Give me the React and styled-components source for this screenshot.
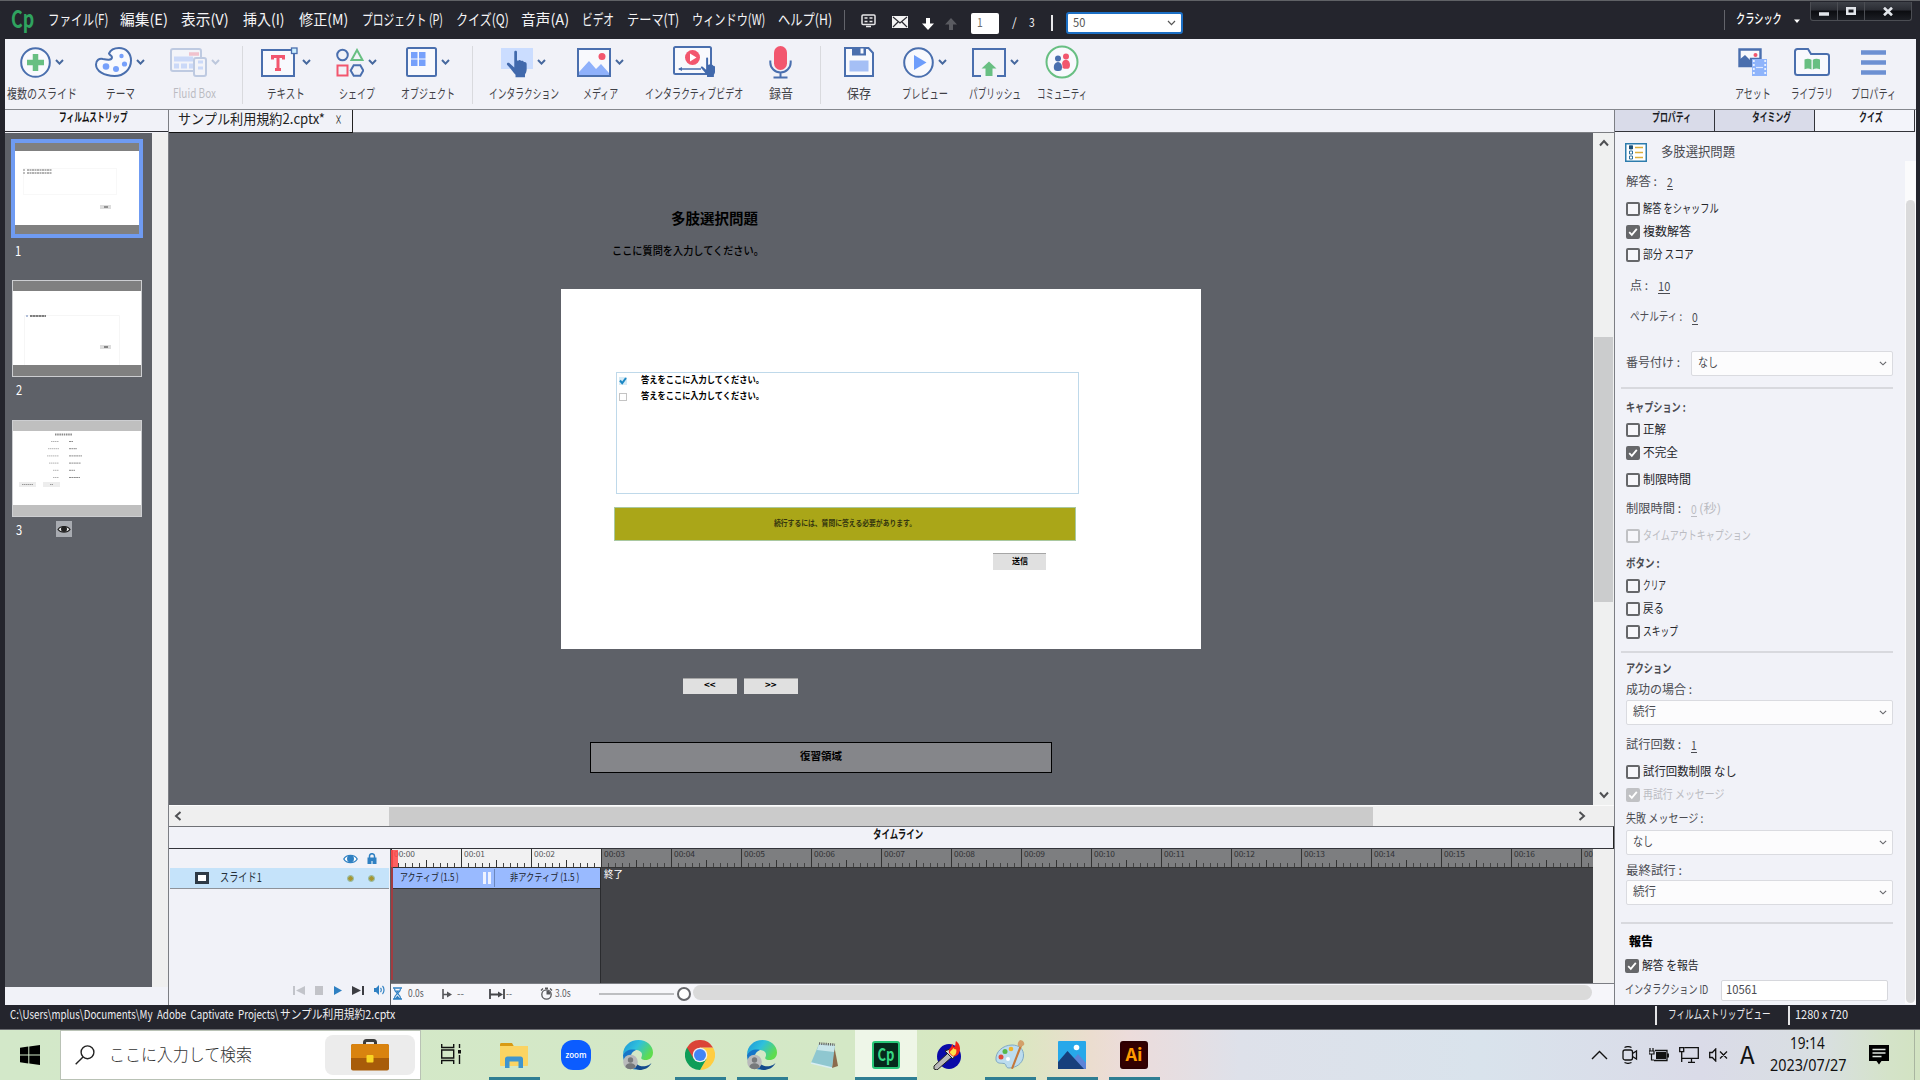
import React, { useLayoutEffect, useRef, useState } from 'react';
import styled, { createGlobalStyle } from 'styled-components';

const GlobalStyle = createGlobalStyle`
  * {
    box-sizing: border-box;
  }

  body {
    margin: 0;
    overflow: hidden;
    font-family: 'Noto Sans CJK JP', 'Noto Sans', sans-serif;
    font-size: 12px;
    color: #3f4046;
  }

  svg {
    display: block;
    flex: none;
  }
`;

/* ---------- text that keeps a fixed width ---------- */

const FitBox = styled.span`
  display: block;
  flex: none;
  width: ${p => p.$w}px;
  height: ${p => p.$size * 1.4}px;
  line-height: ${p => p.$size * 1.4}px;
  font-size: ${p => p.$size}px;
  font-weight: ${p => p.$weight};
  color: ${p => p.$color || 'inherit'};
  white-space: pre;
`;

const FitInner = styled.span`
  display: inline-block;
  transform-origin: 0 50%;
`;

function Fit({ w, size = 12, weight = 400, color, children }) {
  const ref = useRef(null);
  const [scale, setScale] = useState(1);

  useLayoutEffect(() => {
    setScale(w / ref.current.offsetWidth);
  }, [w, children]);

  return (
    <FitBox $w={w} $size={size} $weight={weight} $color={color}>
      <FitInner ref={ref} style={{ transform: `translateY(-1px) scaleX(${scale})` }}>{children}</FitInner>
    </FitBox>
  );
}

/* ---------- window ---------- */

const Screen = styled.div`
  width: 1920px;
  height: 1080px;
  display: flex;
  flex-direction: column;
  overflow: hidden;
`;

const AppWindow = styled.div`
  height: 1030px;
  flex: none;
  display: flex;
  flex-direction: column;
  background: #24252d;
  border-top: 1px solid #606266;
  border-bottom: 1px solid #6a6c70;
`;

const TitleBar = styled.div`
  height: 38px;
  flex: none;
  display: flex;
  align-items: flex-start;
  padding-left: 11px;
  color: #f4f4f6;
`;

const Logo = styled.div`
  width: 37px;
  margin-top: 1px;
  color: #2fa35f;
`;

const Menus = styled.div`
  width: 796px;
  height: 37px;
  display: flex;
  align-items: center;
  flex: none;
`;

const MenuItem = styled.div`
  margin-right: ${p => p.$gap}px;
`;

const BarLine = styled.span`
  width: ${p => p.$w || 1}px;
  height: ${p => p.$h || 20}px;
  flex: none;
  background: ${p => p.$color || '#63646b'};
`;

const TitleTools = styled.div`
  height: 44px;
  display: flex;
  align-items: center;
  flex: none;
`;

const Spacer = styled.div`
  width: ${p => p.$w}px;
  flex: none;
`;

const PageInput = styled.div`
  width: 28px;
  height: 21px;
  padding-left: 6px;
  display: flex;
  align-items: center;
  background: #fff;
  border-radius: 2px;
  color: #6b6b6b;
`;

const ZoomSelect = styled.div`
  width: 117px;
  height: 22px;
  padding: 0 5px;
  display: flex;
  align-items: center;
  justify-content: space-between;
  background: #fff;
  border: 2px solid #1c6fc4;
  border-radius: 3px;
  color: #555;
`;

const Workspace = styled.div`
  height: 38px;
  margin-left: auto;
  padding-top: 9px;
  display: flex;
  align-items: flex-start;
`;

const WindowButtons = styled.div`
  display: flex;
  height: 19px;
  margin: -8px 8px 0 10px;
  border: 1px solid #4b4d53;
  border-top: none;
  border-radius: 0 0 3px 3px;
  background: linear-gradient(#3e4148, #2a2c33 45%, #0b0c10 50%, #1c1e24);
`;

const WindowButton = styled.div`
  width: ${p => p.$w}px;
  display: flex;
  align-items: center;
  justify-content: center;
  border-right: ${p => (p.$last ? 'none' : '1px solid #4b4d53')};
`;

const Frame = styled.div`
  height: 966px;
  margin: 0 4px 0 5px;
  display: flex;
  flex-direction: column;
  background: #f1f2f8;
`;

/* ---------- toolbar ---------- */

const Toolbar = styled.div`
  height: 71px;
  flex: none;
  display: flex;
  border-bottom: 1px solid #85888e;
`;

const Tool = styled.div`
  width: ${p => p.$w}px;
  flex: none;
  display: flex;
  flex-direction: column;
  align-items: center;
  padding-top: 6px;
  opacity: ${p => (p.$disabled ? 0.3 : 1)};
`;

const ToolIcon = styled.div`
  height: 34px;
  display: flex;
  align-items: center;
  gap: 4px;
  margin-bottom: 6px;
`;

const ToolSep = styled.div`
  width: ${p => p.$w}px;
  flex: none;
  display: flex;
  justify-content: center;
  padding-top: 7px;
`;

const Push = styled.div`
  flex: 1;
`;

/* ---------- columns ---------- */

const Columns = styled.div`
  flex: 1;
  min-height: 0;
  display: flex;
`;

const FilmColumn = styled.div`
  width: 164px;
  flex: none;
  display: flex;
  flex-direction: column;
  border-right: 1px solid #7c7e84;
`;

const PanelTitle = styled.div`
  height: 22px;
  flex: none;
  display: flex;
  padding-left: 54px;
  color: #111;
  border-bottom: 1px solid #2d2e34;
`;

const FilmRow = styled.div`
  display: flex;
  height: 854px;
  margin-top: 1px;
`;

const FilmBody = styled.div`
  width: 147px;
  padding-left: 6px;
  background: #5e6168;
`;

const FilmTrack = styled.div`
  flex: 1;
  background: #efefef;
`;

const FilmItem = styled.div`
  height: 140px;
  padding-top: ${p => (p.$selected ? 6 : 7)}px;
  padding-left: ${p => (p.$selected ? 0 : 1)}px;
`;

const Thumb = styled.div`
  width: ${p => (p.$selected ? 132 : 130)}px;
  height: ${p => (p.$selected ? 99 : 97)}px;
  display: flex;
  flex-direction: column;
  background: #fff;
  border: ${p => (p.$selected ? '4px solid #6f9bf2' : '1px solid #cdced1')};
`;

const Band = styled.div`
  height: ${p => p.$h}px;
  flex: none;
  background: ${p => p.$color};
`;

const ThumbBody = styled.div`
  flex: 1;
  min-height: 0;
  overflow: hidden;
`;

const FilmCaption = styled.div`
  display: flex;
  align-items: center;
  height: 18px;
  padding-left: 4px;
  margin-top: 5px;
  color: #fff;
`;

const EyeBadge = styled.div`
  width: 16px;
  height: 16px;
  margin-left: 34px;
  margin-top: -4px;
  display: flex;
  align-items: center;
  justify-content: center;
  background: #a8abb1;
`;

const CenterColumn = styled.div`
  width: 1445px;
  flex: none;
  display: flex;
  flex-direction: column;
`;

const DocTabs = styled.div`
  height: 23px;
  flex: none;
  border-bottom: 1px solid #7b7d82;
`;

const DocTab = styled.div`
  width: 184px;
  height: 23px;
  padding-left: 9px;
  display: flex;
  align-items: flex-start;
  gap: 10px;
  color: #222;
  border-right: 1px solid #222;
  border-bottom: 1px solid #111;
`;

const CanvasRow = styled.div`
  height: 672px;
  flex: none;
  display: flex;
`;

const Canvas = styled.div`
  position: relative;
  width: 1424px;
  flex: none;
  background: #5e6168;
  color: #000;
`;

const VScroll = styled.div`
  width: 21px;
  display: flex;
  flex-direction: column;
  align-items: center;
  justify-content: space-between;
  padding: 4px 0;
  background: #eff0f0;
`;

const VThumb = styled.div`
  width: 19px;
  height: 265px;
  background: #cbcccd;
`;

const HScroll = styled.div`
  height: 21px;
  flex: none;
  display: flex;
  align-items: center;
  padding: 0 26px 0 3px;
  background: #efefef;
  border-top: 1px solid #fbfbfb;
`;

const HThumb = styled.div`
  width: 984px;
  height: 19px;
  margin: 0 auto 0 205px;
  background: #cbcbcb;
`;

/* ---------- objects on the slide canvas ---------- */

const Placed = styled.div`
  position: absolute;
  left: ${p => p.$x}px;
  top: ${p => p.$y}px;
`;

const Slide = styled(Placed)`
  width: 640px;
  height: 360px;
  background: #fff;
`;

const AnswerArea = styled(Placed)`
  width: 463px;
  height: 122px;
  border: 1px solid #bfd9ea;
  padding: 0 0 0 2px;
`;

const Answer = styled.div`
  height: 16px;
  display: flex;
  align-items: center;
  gap: 14px;
`;

const Feedback = styled(Placed)`
  width: 462px;
  height: 34px;
  display: flex;
  align-items: center;
  justify-content: center;
  background: #aaa618;
  border: 1px solid #a9c8a0;
`;

const SlideButton = styled(Placed)`
  width: ${p => p.$w}px;
  height: ${p => p.$h || 16}px;
  display: flex;
  align-items: center;
  justify-content: center;
  background: #e0e0e0;
  border-top: 1px solid #a6a6a6;
`;

const ReviewArea = styled(Placed)`
  width: 462px;
  height: 31px;
  display: flex;
  align-items: center;
  justify-content: center;
  background: #85868a;
  border: 1px solid #000;
`;

/* ---------- timeline ---------- */

const TimelineTitle = styled.div`
  height: 23px;
  flex: none;
  display: flex;
  padding-left: 704px;
  color: #111;
  border: 1px solid #6f7176;
  border-bottom-color: #33343a;
  border-right-color: #222;
  border-left: none;
`;

const Timeline = styled.div`
  flex: 1;
  min-height: 0;
  display: flex;
`;

const TrackNames = styled.div`
  width: 222px;
  flex: none;
  display: flex;
  flex-direction: column;
  border-right: 1px solid #5a5c62;
`;

const TrackHead = styled.div`
  height: 19px;
  padding: 0 13px 0 174px;
  display: flex;
  align-items: center;
  justify-content: space-between;
`;

const TrackRow = styled.div`
  width: 219px;
  height: 21px;
  margin-left: 1px;
  padding: 0 15px 0 25px;
  display: flex;
  align-items: center;
  background: #c5e3fa;
  border-bottom: 1px solid #8e9299;
`;

const TrackSquare = styled.span`
  width: 14px;
  height: 12px;
  margin-right: 11px;
  background: #fff;
  border: 3px solid #2e3a46;
`;

const Dot = styled.span`
  width: 5px;
  height: 5px;
  margin-left: ${p => p.$ml}px;
  border-radius: 50%;
  background: #a59632;
  outline: 1px solid #8fb28c;
`;

const PlayControls = styled.div`
  height: 30px;
  margin-top: auto;
  padding: 0 5px 0 124px;
  display: flex;
  align-items: center;
  justify-content: space-between;
`;

const Tracks = styled.div`
  width: 1223px;
  display: flex;
  flex-direction: column;
  background: #efefef;
`;

const TrackView = styled.div`
  width: 1202px;
  height: 134px;
  position: relative;
  display: flex;
  flex-direction: column;
`;

const Ruler = styled.div`
  height: 19px;
  display: flex;
  overflow: hidden;
  border-bottom: 1px solid #333;
`;

const Second = styled.div`
  width: 70px;
  flex: none;
  padding-left: 2px;
  color: ${p => (p.$off ? '#2f3033' : '#55565a')};
  border-left: 1px solid #333;
  background:
    linear-gradient(#333, #333) 34px 100% / 1px 7px no-repeat,
    repeating-linear-gradient(90deg, transparent 0 6px, #444 6px 7px) 0 100% / 69px 4px no-repeat,
    ${p => (p.$off ? '#7d7e80' : '#f1f1f2')};
`;

const TrackArea = styled.div`
  flex: 1;
  display: flex;
`;

const TrackOn = styled.div`
  width: 210px;
  background: #5e6168;
  border-right: 1px solid #2a2b2e;
`;

const TrackOff = styled.div`
  flex: 1;
  padding: 0 0 0 3px;
  color: #fff;
  background: #434448;
`;

const Clip = styled.div`
  height: 21px;
  display: flex;
  align-items: center;
  background: #99baff;
  border-bottom: 1px solid #333;
  padding-left: 9px;
  color: #20232b;
`;

const Pause = styled.span`
  width: 8px;
  height: 12px;
  margin: 0 3px 0 24px;
  border: solid #eef2ff;
  border-width: 0 3px;
`;

const Playhead = styled.div`
  position: absolute;
  left: 0;
  top: 1px;
  width: 2px;
  height: 130px;
  background: #a23c40;
`;

const PlayheadGrip = styled.div`
  width: 7px;
  height: 17px;
  background: rgba(255, 72, 72, 0.85);
`;

const TimelineFoot = styled.div`
  height: 21px;
  display: flex;
  align-items: center;
  padding-left: 2px;
  padding-bottom: 1px;
  background: #f6f6fa;
  border-top: 1px solid #7c7e84;
  color: #5d5e64;
`;

const SliderLine = styled.span`
  width: 75px;
  height: 2px;
  background: #bdbec1;
`;

const Knob = styled.span`
  width: 14px;
  height: 14px;
  margin: 0 2px 0 3px;
  border: 2px solid #66676b;
  border-radius: 50%;
  background: #fff;
`;

const FootThumb = styled.span`
  width: 899px;
  height: 15px;
  margin-bottom: 3px;
  border-radius: 8px;
  background: #dadada;
`;

/* ---------- quiz properties ---------- */

const QuizColumn = styled.div`
  flex: 1;
  min-width: 0;
  display: flex;
  flex-direction: column;
  border-left: 1px solid #7c7e84;
`;

const PanelTabs = styled.div`
  height: 22px;
  flex: none;
  display: flex;
`;

const PanelTab = styled.div`
  width: 100px;
  display: flex;
  padding-left: ${p => p.$pad}px;
  color: #1b1b1f;
  background: ${p => (p.$active ? '#f3f4fa' : '#d9dbe9')};
  border-right: 1px solid #33343a;
  border-bottom: 1px solid #33343a;
`;

const QuizBody = styled.div`
  flex: 1;
  min-height: 0;
  display: flex;
  justify-content: space-between;
`;

const Form = styled.div`
  width: 279px;
  padding: 10px 0 0 6px;
  flex: none;
`;

const Row = styled.div`
  height: ${p => p.$h || 20}px;
  margin-top: ${p => p.$mt}px;
  padding-left: ${p => (p.$pad === undefined ? 5 : p.$pad)}px;
  display: flex;
  align-items: center;
  color: ${p => (p.$disabled ? '#bbbcc2' : p.$dark ? '#25262b' : '#4b4c52')};
`;

const Rule = styled.div`
  width: 272px;
  height: 2px;
  margin-top: ${p => p.$mt}px;
  background: #d8d9de;
`;

const Box = styled.span`
  width: 14px;
  height: 14px;
  margin-right: 3px;
  flex: none;
  display: flex;
  align-items: center;
  justify-content: center;
  border: 2px solid ${p => (p.$disabled ? '#c0c1c4' : '#66676a')};
  border-radius: 2px;
  background: ${p => (!p.$on ? '#f6f6fa' : p.$disabled ? '#c0c1c4' : '#66676a')};
`;

const Value = styled.span`
  margin-left: ${p => p.$ml}px;
  height: 15px;
  border-bottom: 1px solid currentColor;
`;

const Select = styled.div`
  width: ${p => p.$w || 267}px;
  height: 25px;
  margin-left: ${p => p.$ml || 0}px;
  padding: 0 5px 0 6px;
  display: flex;
  align-items: center;
  justify-content: space-between;
  flex: none;
  background: #fcfcfd;
  border: 1px solid #dadbe0;
  border-radius: 2px;
`;

const IdInput = styled.div`
  width: 167px;
  height: 21px;
  margin-left: 13px;
  padding-left: 4px;
  display: flex;
  align-items: center;
  background: #fff;
  border: 1px solid #d6d7dc;
  border-radius: 2px;
`;

const QuizScroll = styled.div`
  width: 11px;
  height: 843px;
  margin: 29px 0 0;
  padding: 39px 1px 1px;
  background: #fbfbfc;
`;

const QuizThumb = styled.div`
  height: 100%;
  border-radius: 5px;
  background: #dadadb;
`;

/* ---------- status bar and taskbar ---------- */

const StatusBar = styled.div`
  flex: 1;
  display: flex;
  align-items: flex-start;
  padding: 1px 72px 0 10px;
  color: #eeeef1;
`;

const StatusText = styled.div`
  margin-top: 1px;
  margin-right: ${p => p.$mr || 0}px;
`;

const Taskbar = styled.div`
  height: 50px;
  flex: none;
  display: flex;
  align-items: stretch;
  background: linear-gradient(
    90deg,
    #d3e8c9 0,
    #d4e8c6 850px,
    #d9e8bf 1010px,
    #ebddcf 1090px,
    #ecdcdb 1130px,
    #dee1ea 1240px,
    #d9e3ec 1480px,
    #dadbe8 1700px,
    #d9dfe2 1820px,
    #d4e3c8 1890px,
    #d2e3c2 1920px
  );
  color: #111;
`;

const Start = styled.div`
  width: 60px;
  display: flex;
  align-items: center;
  justify-content: center;
`;

const Search = styled.div`
  width: 361px;
  padding: 0 5px 0 14px;
  display: flex;
  align-items: center;
  background: #fff;
  border: 1px solid #b9c2b5;
  color: #333;
`;

const SearchPill = styled.div`
  width: 90px;
  height: 40px;
  margin-left: auto;
  display: flex;
  align-items: center;
  justify-content: center;
  border-radius: 8px;
  background: #ececec;
`;

const TaskSlot = styled.div`
  width: 62px;
  flex: none;
  display: flex;
  flex-direction: column;
  align-items: center;
  background: ${p => (p.$active ? 'rgba(255, 255, 255, 0.6)' : 'none')};
`;

const TaskIcon = styled.div`
  height: 47px;
  padding-top: 3px;
  display: flex;
  align-items: center;
`;

const TaskLine = styled.div`
  width: ${p => (p.$active ? 62 : 51)}px;
  height: 3px;
  background: #2f7e93;
`;

const Tray = styled.div`
  margin-left: auto;
  display: flex;
  align-items: center;
`;

const Clock = styled.div`
  width: 75px;
  margin: 0 24px 0 15px;
  padding-top: 2px;
  display: flex;
  flex-direction: column;
  align-items: center;
  font-family: 'Noto Sans', sans-serif;
`;

const DesktopEdge = styled.div`
  width: 6px;
  height: 50px;
  margin-left: 25px;
  border-left: 1px solid #a9b5a0;
`;

/* ---------- small drawings ---------- */

const Chevron = ({ w = 9, h = 6, color = '#46689e', sw = 2 }) => (
  <svg width={w} height={h} viewBox="0 0 9 6" preserveAspectRatio="none">
    <path d="M1 1l3.5 3.6L8 1" fill="none" stroke={color} strokeWidth={sw} />
  </svg>
);

const Angle = ({ turn }) => (
  <svg width="12" height="12" viewBox="0 0 12 12" transform={`rotate(${turn})`}>
    <path d="M2 8.5l4-4.5 4 4.5" fill="none" stroke="#4f5053" strokeWidth="2" />
  </svg>
);

const Check = () => (
  <svg width="10" height="10" viewBox="0 0 10 10">
    <path d="M1.2 5.2l2.6 2.7 5-6" fill="none" stroke="#fff" strokeWidth="1.8" />
  </svg>
);

const BLUE = '#4a6fae';
const LIGHT = '#76a0fb';
const RED = '#f2566e';
const GREEN = '#68bf82';

const Hand = ({ x = 0, y = 0, s = 1 }) => (
  <path
    transform={`translate(${x} ${y}) scale(${s})`}
    fill="#4169ac"
    d="M7.4 1.4c0-1.700 2.600-1.700 2.600 0v8.200l1.200.1c.3-1.100 2.300-1 2.600.3 1-.7 2.600-.2 2.800 1.100 1.300-.4 2.600.3 2.600 1.800v5.300c0 2.200-1 3.600-1.600 4.600V25.500H8.600v-2.300C6.500 21 4 17 .7 13.800c-1.100-1.400.7-2.700 2.200-1.700l4.500 4z"
  />
);

const icons = {
  slides: (
    <svg width="31" height="31" viewBox="0 0 31 31">
      <circle cx="15.500" cy="15.500" r="14.300" fill="#f8f9fd" stroke={BLUE} strokeWidth="2" />
      <path d="M15.500 7v17M7 15.500h17" stroke={GREEN} strokeWidth="5.500" />
    </svg>
  ),
  theme: (
    <svg width="37" height="30" viewBox="0 0 37 30">
      <path
        d="M14 6.500C15.500 3 19 1 24 1c7 0 12 5 12 12.500C36 22 29 29 19.500 29 9 29 1 24 1 17.500c0-4 3-6.500 7-5.500 4 .8 8.500 1.500 9-1.500.3-2-2.500-2-3-4z"
        fill="#f8f9fd"
        stroke={BLUE}
        strokeWidth="2"
      />
      <circle cx="11" cy="19.500" r="3.300" fill={LIGHT} />
      <circle cx="21" cy="22" r="3" fill={LIGHT} />
      <circle cx="29.500" cy="17" r="2.600" fill={LIGHT} />
      <circle cx="26.500" cy="9" r="2.200" fill={LIGHT} />
    </svg>
  ),
  fluid: (
    <svg width="37" height="29" viewBox="0 0 37 29">
      <rect x="1" y="1" width="30" height="22" rx="2" fill="#f8f9fd" stroke={BLUE} strokeWidth="2" />
      <path d="M19 6h10" stroke={RED} strokeWidth="3.500" />
      <path d="M4 11h19M4 18h5M11 18h6M19 18h4" stroke={LIGHT} strokeWidth="5" />
      <rect x="24" y="10" width="12" height="18" rx="2" fill="#f8f9fd" stroke={BLUE} strokeWidth="2" />
      <path d="M28 14h5M28 20h5" stroke={LIGHT} strokeWidth="3" />
    </svg>
  ),
  text: (
    <svg width="37" height="30" viewBox="0 0 37 30">
      <rect x="1" y="3" width="32" height="26" fill="#f8f9fd" stroke={BLUE} strokeWidth="2" />
      <path d="M11.500 12.500V9.500h11v3M17 9.500V22M14 22.500h6" fill="none" stroke={RED} strokeWidth="3" />
      <rect x="30.500" y="1" width="5.500" height="5.500" fill="#cdefff" stroke={BLUE} strokeWidth="1.300" />
    </svg>
  ),
  shape: (
    <svg width="28" height="29" viewBox="0 0 28 29">
      <circle cx="6.500" cy="7" r="5.300" fill="none" stroke={BLUE} strokeWidth="2" />
      <path d="M21 2l5.500 10h-11z" fill="none" stroke={GREEN} strokeWidth="2" />
      <rect x="1.500" y="17.500" width="10" height="10" fill="none" stroke={RED} strokeWidth="2" />
      <path d="M17.700 17.300h6.600l3 5.200-3 5.200h-6.600l-3-5.200z" fill="none" stroke={BLUE} strokeWidth="2" />
    </svg>
  ),
  object: (
    <svg width="31" height="30" viewBox="0 0 31 30">
      <rect x="1" y="1" width="29" height="28" rx="1.500" fill="#f8f9fd" stroke={BLUE} strokeWidth="2" />
      <path d="M5 5h6.500v6.500H5zM13 5h6.500v6.500H13zM5 12.500h6.500V19H5zM13 12.500h6.500V19H13z" fill={LIGHT} />
    </svg>
  ),
  interaction: (
    <svg width="32" height="31" viewBox="0 0 32 31">
      <rect width="32" height="21" y="1" fill="#cbddff" />
      <Hand x={5.500} y={3.500} s={1.050} />
    </svg>
  ),
  media: (
    <svg width="34" height="29" viewBox="0 0 34 29">
      <rect x="1" y="1" width="32" height="27" fill="#f8f9fd" stroke={BLUE} strokeWidth="2" />
      <path d="M2 24l10-11 7 8 5-5 8 9v2H2z" fill="#8fb1fb" />
      <circle cx="25" cy="8.500" r="3.500" fill={RED} />
    </svg>
  ),
  video: (
    <svg width="42" height="32" viewBox="0 0 42 32">
      <rect x="1" y="1" width="37" height="27" rx="1.500" fill="#f8f9fd" stroke={BLUE} strokeWidth="2" />
      <circle cx="19.500" cy="11.500" r="7.500" fill={RED} />
      <path d="M17 7.500l6.500 4-6.500 4z" fill="#fff" />
      <path d="M6 23h22" stroke={BLUE} strokeWidth="1.500" />
      <path d="M5 23l4-2v4z" fill={BLUE} />
      <Hand x={27.500} y={11.500} s={0.760} />
    </svg>
  ),
  mic: (
    <svg width="23" height="33" viewBox="0 0 23 33">
      <rect x="5" y="0" width="13" height="24" rx="6.500" fill={RED} />
      <path d="M1.300 14.500v2a10.200 10 0 0020.400 0v-2M11.500 26.500V31M4.500 31.500h14" fill="none" stroke={BLUE} strokeWidth="2" />
    </svg>
  ),
  save: (
    <svg width="30" height="30" viewBox="0 0 30 30">
      <path d="M1 1h23.500L29 6v23H1z" fill="#f8f9fd" stroke={BLUE} strokeWidth="2" />
      <path d="M8 1h14v7.500H8z" fill={BLUE} />
      <path d="M16.500 1.500h3v5h-3z" fill="#f8f9fd" />
      <path d="M5.500 13.500h19v11h-19z" fill="#a5bff5" />
    </svg>
  ),
  preview: (
    <svg width="31" height="31" viewBox="0 0 31 31">
      <circle cx="15.500" cy="15.500" r="14.300" fill="#f8f9fd" stroke={BLUE} strokeWidth="2" />
      <path d="M11 8l12.500 7.500L11 23z" fill="#6d9dfb" />
    </svg>
  ),
  publish: (
    <svg width="34" height="29" viewBox="0 0 34 29">
      <path d="M9 28H1V1h32v27h-8" fill="none" stroke={BLUE} strokeWidth="2" />
      <path d="M17 13.500l7.500 7h-4V28h-7v-7.500h-4z" fill={GREEN} />
    </svg>
  ),
  community: (
    <svg width="34" height="34" viewBox="0 0 34 34">
      <circle cx="17" cy="17" r="15.500" fill="#f8f9fd" stroke={GREEN} strokeWidth="2" />
      <circle cx="13" cy="13.500" r="3" fill={BLUE} />
      <circle cx="21" cy="11.500" r="3" fill={RED} />
      <path d="M9.500 25c-2-4 .5-8 3.500-8s5 4 3.500 8c-1.500 1.300-5.500 1.300-7 0z" fill={BLUE} />
      <path d="M17.500 23c.5-3-1-4 0-6 1.500-3 6-3 7.200 1 .6 2 .2 4-.5 5-1.500 1.300-5 1-6.700 0z" fill={RED} />
    </svg>
  ),
  assets: (
    <svg width="30" height="28" viewBox="0 0 30 28">
      <path d="M1.500 1.500h21V11H13v7H1.500z" fill="#f8f9fd" stroke={BLUE} strokeWidth="2.400" />
      <path d="M1 18V12l6-5 5 5v6z" fill={BLUE} />
      <circle cx="17.500" cy="7" r="2" fill={RED} />
      <rect x="14" y="11" width="15" height="17" fill="#8fb4fb" />
      <path d="M15.800 12v15M27.200 12v15" stroke="#e9f1ff" strokeWidth="1.800" strokeDasharray="2 2" />
      <path d="M18 19.500h7" stroke="#dfe9ff" strokeWidth="1.200" />
    </svg>
  ),
  library: (
    <svg width="36" height="28" viewBox="0 0 36 28">
      <path d="M1 3.500C1 2 2 1 3.500 1H14l3 5h15.500C34 6 35 7 35 8v16.500c0 1.500-1 2.500-2.500 2.500h-29C2 27 1 26 1 24.500z" fill="#f8f9fd" stroke={BLUE} strokeWidth="2" />
      <path d="M10.500 11.500c2.500-1.200 5-1 7 .3V21.500c-2-1.200-4.500-1.300-7-.3zM18.800 11.800c2-1.300 4.500-1.500 7.200-.3v9.700c-2.700-1-5.200-.9-7.200.3z" fill={GREEN} />
    </svg>
  ),
  props: (
    <svg width="25" height="25" viewBox="0 0 25 25">
      <path d="M0 2.500h25M0 12.500h25M0 22.500h25" stroke="#6c90d2" strokeWidth="4.500" />
    </svg>
  ),
};

const tools = [
  { w: 73, icon: 'slides', label: '複数のスライド', lw: 70, menu: true },
  { w: 84, icon: 'theme', label: 'テーマ', lw: 29, menu: true },
  { w: 65, icon: 'fluid', label: 'Fluid Box', lw: 43, menu: true, disabled: true },
  { sep: 30 },
  { w: 58, icon: 'text', label: 'テキスト', lw: 38, menu: true },
  { w: 83, icon: 'shape', label: 'シェイプ', lw: 36, menu: true },
  { w: 60, icon: 'object', label: 'オブジェクト', lw: 54, menu: true },
  { sep: 29 },
  { w: 73, icon: 'interaction', label: 'インタラクション', lw: 70, menu: true, gap: 6 },
  { w: 81, icon: 'media', label: 'メディア', lw: 35, menu: true },
  { w: 105, icon: 'video', label: 'インタラクティブビデオ', lw: 98 },
  { w: 69, icon: 'mic', label: '録音', lw: 24 },
  { sep: 10 },
  { w: 67, icon: 'save', label: '保存', lw: 24 },
  { w: 65, icon: 'preview', label: 'プレビュー', lw: 46, menu: true },
  { w: 76, icon: 'publish', label: 'パブリッシュ', lw: 52, menu: true },
  { w: 58, icon: 'community', label: 'コミュニティ', lw: 50 },
];

const rightTools = [
  { w: 59, icon: 'assets', label: 'アセット', lw: 36 },
  { w: 59, icon: 'library', label: 'ライブラリ', lw: 42 },
  { w: 64, icon: 'props', label: 'プロパティ', lw: 45 },
];

const menus = [
  ['ファイル(F)', 60, 12],
  ['編集(E)', 48, 13],
  ['表示(V)', 48, 14],
  ['挿入(I)', 42, 14],
  ['修正(M)', 49, 14],
  ['プロジェクト (P)', 81, 13],
  ['クイズ(Q)', 53, 12],
  ['音声(A)', 48, 13],
  ['ビデオ', 32, 13],
  ['テーマ(T)', 52, 13],
  ['ウィンドウ(W)', 73, 13],
  ['ヘルプ(H)', 54, 0],
];

function ToolItem({ tool }) {
  if (tool.sep) {
    return <ToolSep $w={tool.sep}><BarLine $h={58} $color="#d9dade" /></ToolSep>;
  }
  return (
    <Tool $w={tool.w} $disabled={tool.disabled}>
      <ToolIcon>
        {icons[tool.icon]}
        {tool.menu && <Chevron />}
      </ToolIcon>
      <Fit w={tool.lw} size={13}>{tool.label}</Fit>
    </Tool>
  );
}

/* ---------- title bar ---------- */

function Header() {
  return (
    <TitleBar>
      <Logo><Fit w={23} size={24} weight={700}>Cp</Fit></Logo>
      <Menus>
        {menus.map(([label, w, gap]) => (
          <MenuItem key={label} $gap={gap}><Fit w={w} size={15}>{label}</Fit></MenuItem>
        ))}
        <Spacer $w={12} />
        <BarLine />
      </Menus>
      <TitleTools>
        <Spacer $w={17} />
        <svg width="15" height="14" viewBox="0 0 15 14" transform="translate(0 -2)">
          <rect x="1" y="1" width="13" height="9.500" rx="1" fill="none" stroke="#e6e6e8" strokeWidth="1.500" />
          <path d="M3.500 4h3M8.500 4h3M3.500 7.500h3M8.500 7.500h3M5 12.500h5" stroke="#e6e6e8" strokeWidth="1.500" />
        </svg>
        <Spacer $w={16} />
        <svg width="16" height="12" viewBox="0 0 16 12" transform="translate(0 -1)">
          <rect width="16" height="12" fill="#f4f4f4" />
          <path d="M1 1l7 6 7-6M1 11l5-5M15 11l-5-5" fill="none" stroke="#2b2c33" strokeWidth="1.200" />
        </svg>
        <Spacer $w={14} />
        <svg width="12" height="12" viewBox="0 0 12 12" transform="translate(0 1)">
          <path d="M4 0h4v5.500h4L6 12 0 5.500h4z" fill="#fff" />
        </svg>
        <Spacer $w={11} />
        <svg width="12" height="12" viewBox="0 0 12 12" transform="translate(0 1)">
          <path d="M4 12h4V6.500h4L6 0 0 6.500h4z" fill="#5a5b61" />
        </svg>
        <Spacer $w={14} />
        <PageInput><Fit w={6} size={12}>1</Fit></PageInput>
        <Spacer $w={13} />
        <Fit w={5} size={12}>/</Fit>
        <Spacer $w={12} />
        <Fit w={6} size={12}>3</Fit>
        <Spacer $w={16} />
        <BarLine $w={2} $h={16} $color="#e8e8ea" />
        <Spacer $w={13} />
        <ZoomSelect>
          <Fit w={12} size={12}>50</Fit>
          <Chevron w={9} h={6} color="#555" sw={1.200} />
        </ZoomSelect>
      </TitleTools>
      <Workspace>
        <BarLine />
        <Spacer $w={11} />
        <Fit w={46} size={13} weight={500} color="#fff">クラシック</Fit>
        <Spacer $w={12} />
        <svg width="6" height="13" viewBox="0 0 6 13"><path d="M0 9.500h6l-3 3.500z" fill="#fff" /></svg>
        <WindowButtons>
          <WindowButton $w={27}>
            <svg width="10" height="10"><path d="M0 8h10" stroke="#e2e5ea" strokeWidth="3.500" /></svg>
          </WindowButton>
          <WindowButton $w={27}>
            <svg width="10" height="8"><rect x="1.250" y="1.250" width="7.500" height="5.500" fill="none" stroke="#e2e5ea" strokeWidth="2.500" /></svg>
          </WindowButton>
          <WindowButton $w={46} $last>
            <svg width="10" height="9" viewBox="0 0 10 9"><path d="M1 .7l8 7.600M9 .7L1 8.300" stroke="#e2e5ea" strokeWidth="2.600" /></svg>
          </WindowButton>
        </WindowButtons>
      </Workspace>
    </TitleBar>
  );
}

/* ---------- filmstrip ---------- */

function ThumbOne() {
  return (
    <svg width="124" height="75" viewBox="0 0 124 75">
      <rect x="8.500" y="17.500" width="93" height="26" fill="none" stroke="#f8f8f8" />
      <path d="M8 19h2M8 22h2" stroke="#aaa" strokeWidth="1.300" />
      <path d="M12 19h25M12 22h25" stroke="#999" strokeWidth="1.300" strokeDasharray="2 .5" />
      <path d="M85 54h11v4H85z" fill="#ddd" />
      <path d="M89 56h4" stroke="#777" strokeWidth="1.500" />
    </svg>
  );
}

function ThumbTwo() {
  return (
    <svg width="128" height="74" viewBox="0 0 128 74">
      <path d="M11.500 74V24.500h95V74" fill="none" stroke="#f6f6f6" />
      <path d="M13 25h2" stroke="#9ac" strokeWidth="1.500" />
      <path d="M17 25h16" stroke="#555" strokeWidth="1.600" strokeDasharray="2.500 .4" />
      <path d="M87 54h11v4H87z" fill="#ddd" />
      <path d="M91 56h4" stroke="#666" strokeWidth="1.500" />
    </svg>
  );
}

const scoreRows = [[38, 8, 4], [35, 11, 8], [34, 12, 13], [36, 10, 12], [40, 6, 6], [40, 6, 11]];

function ThumbThree() {
  return (
    <svg width="128" height="74" viewBox="0 0 128 74">
      <path d="M42 3.500h17" stroke="#8a8a8a" strokeWidth="1.800" strokeDasharray="1.500 .7" />
      {scoreRows.map(([x, w, v], i) => (
        <g key={i}>
          <path d={`M${x} ${10.500 + i * 7.200}h${w}`} stroke="#b3b3b3" strokeDasharray="1.500 .5" />
          <path d={`M56 ${10.500 + i * 7.200}h${v}`} stroke="#8d8d8d" strokeDasharray="2 .4" />
        </g>
      ))}
      <path d="M6 51h17v5H6zM30 51h17v5H30z" fill="#ededed" />
      <path d="M9 53.500h11M37 53.500h3" stroke="#999" strokeDasharray="1.500 .5" />
    </svg>
  );
}

function Filmstrip() {
  return (
    <FilmColumn>
      <PanelTitle><Fit w={69} size={12} weight={700}>フィルムストリップ</Fit></PanelTitle>
      <FilmRow>
        <FilmBody>
          <FilmItem $selected>
            <Thumb $selected>
              <Band $h={8} $color="#808080" />
              <ThumbBody><ThumbOne /></ThumbBody>
              <Band $h={9} $color="#808080" />
            </Thumb>
            <FilmCaption><Fit w={6} size={13}>1</Fit></FilmCaption>
          </FilmItem>
          <FilmItem>
            <Thumb>
              <Band $h={10} $color="#808080" />
              <ThumbBody><ThumbTwo /></ThumbBody>
              <Band $h={11} $color="#808080" />
            </Thumb>
            <FilmCaption><Fit w={6} size={13}>2</Fit></FilmCaption>
          </FilmItem>
          <FilmItem>
            <Thumb>
              <Band $h={10} $color="#bfbfbf" />
              <ThumbBody><ThumbThree /></ThumbBody>
              <Band $h={11} $color="#bfbfbf" />
            </Thumb>
            <FilmCaption>
              <Fit w={6} size={13}>3</Fit>
              <EyeBadge>
                <svg width="14" height="10" viewBox="0 0 14 10">
                  <path d="M1 5.500C3.500 1.500 10.500 1.500 13 5.500 10.500 9 3.500 9 1 5.500z" fill="#eee" stroke="#222" strokeWidth="1.200" />
                  <circle cx="7" cy="5" r="3" fill="#222" />
                </svg>
              </EyeBadge>
            </FilmCaption>
          </FilmItem>
        </FilmBody>
        <FilmTrack />
      </FilmRow>
    </FilmColumn>
  );
}

/* ---------- canvas ---------- */

function Stage() {
  return (
    <CanvasRow>
      <Canvas>
        <Placed $x={502} $y={76}><Fit w={87} size={14.500} weight={700}>多肢選択問題</Fit></Placed>
        <Placed $x={443} $y={110}><Fit w={152} size={11.500} weight={500}>ここに質問を入力してください。</Fit></Placed>
        <Slide $x={392} $y={156}>
          <AnswerArea $x={55} $y={83}>
            <Answer>
              <svg width="8" height="8" viewBox="0 0 8 8">
                <rect width="8" height="8" fill="#d7ebf5" />
                <path d="M1 3.500l2.200 2.700L7 1" fill="none" stroke="#1b87c4" strokeWidth="2" />
              </svg>
              <Fit w={123} size={9.500} weight={700}>答えをここに入力してください。</Fit>
            </Answer>
            <Answer>
              <svg width="8" height="8" viewBox="0 0 8 8">
                <rect x=".5" y=".5" width="7" height="7" fill="#fff" stroke="#c4c4c4" />
              </svg>
              <Fit w={123} size={9.500} weight={700}>答えをここに入力してください。</Fit>
            </Answer>
          </AnswerArea>
          <Feedback $x={53} $y={218}>
            <Fit w={142} size={8} weight={700} color="#35360f">続行するには、質問に答える必要があります。</Fit>
          </Feedback>
          <SlideButton $x={432} $y={264} $w={53} $h={17}><Fit w={16} size={8.500} weight={700}>送信</Fit></SlideButton>
        </Slide>
        <SlideButton $x={514} $y={545} $w={54}><Fit w={12} size={9} weight={700}>&lt;&lt;</Fit></SlideButton>
        <SlideButton $x={575} $y={545} $w={54}><Fit w={12} size={9} weight={700}>&gt;&gt;</Fit></SlideButton>
        <ReviewArea $x={421} $y={609}><Fit w={42} size={10.500} weight={700}>復習領域</Fit></ReviewArea>
      </Canvas>
      <VScroll>
        <Angle turn={0} />
        <VThumb />
        <Angle turn={180} />
      </VScroll>
    </CanvasRow>
  );
}

/* ---------- timeline ---------- */

const seconds = Array.from({ length: 17 }, (_, i) => `00:${String(i).padStart(2, '0')}`);
const SKY = '#2f80c2';

function TimelinePanel() {
  return (
    <Timeline>
      <TrackNames>
        <TrackHead>
          <svg width="15" height="10" viewBox="0 0 15 10">
            <path d="M.8 5C3.500.2 11.500.2 14.200 5 11.500 9.800 3.500 9.800.8 5z" fill="#fff" stroke={SKY} strokeWidth="1.300" />
            <circle cx="7.500" cy="4.800" r="3.500" fill={SKY} />
          </svg>
          <svg width="10" height="11" viewBox="0 0 10 11">
            <path d="M2.500 5V3a2.500 2.300 0 015 0v2" fill="none" stroke={SKY} strokeWidth="1.500" />
            <path d="M.5 4.500h9V11h-9z" fill={SKY} />
            <path d="M4.500 8h1v3h-1z" fill="#fff" />
          </svg>
        </TrackHead>
        <TrackRow>
          <TrackSquare />
          <Fit w={42} size={12} color="#25303a">スライド1</Fit>
          <Dot $ml={86} />
          <Dot $ml={16} />
        </TrackRow>
        <PlayControls>
          <svg width="12" height="9" viewBox="0 0 12 9"><path d="M0 0h2v9H0zM12 0v9L3 4.500z" fill="#c2c4ca" /></svg>
          <svg width="8" height="9"><rect width="8" height="9" fill="#c2c3c8" /></svg>
          <svg width="8" height="9" viewBox="0 0 8 9"><path d="M0 0l8 4.500L0 9z" fill={SKY} /></svg>
          <svg width="12" height="9" viewBox="0 0 12 9"><path d="M10 0h2v9h-2zM0 0v9l9-4.500z" fill="#3c3d42" /></svg>
          <svg width="11" height="10" viewBox="0 0 11 10">
            <path d="M0 3h2l3-3v10L2 7H0z" fill={SKY} />
            <path d="M6.500 3c1 1 1 3 0 4M8.500 1c2 2 2 6 0 8" fill="none" stroke={SKY} strokeWidth="1.200" />
          </svg>
        </PlayControls>
      </TrackNames>
      <Tracks>
        <TrackView>
          <Ruler>
            {seconds.map((s, i) => (
              <Second key={s} $off={i > 2}><Fit w={21} size={8}>{s}</Fit></Second>
            ))}
            <Second $off><Fit w={9} size={8}>00</Fit></Second>
          </Ruler>
          <TrackArea>
            <TrackOn>
              <Clip>
                <Fit w={59} size={10.500}>アクティブ (1.5 )</Fit>
                <Pause />
                <BarLine $h={18} $color="#6c87bd" />
                <Spacer $w={15} />
                <Fit w={69} size={10.500}>非アクティブ (1.5 )</Fit>
              </Clip>
            </TrackOn>
            <TrackOff><Fit w={19} size={10}>終了</Fit></TrackOff>
          </TrackArea>
          <Playhead><PlayheadGrip /></Playhead>
        </TrackView>
        <TimelineFoot>
          <svg width="9" height="13" viewBox="0 0 9 13">
            <path d="M0 1h9M0 12h9" stroke={SKY} strokeWidth="1.600" />
            <path d="M1.500 1.500C1.500 5 4 5 4 6.500S1.500 8 1.500 11.500h6C7.500 8 5 8 5 6.500s2.500-1.500 2.500-5" fill="none" stroke={SKY} strokeWidth="1.200" />
            <path d="M2 11.500l2.500-3 2.500 3zM2.500 3.500h4l-2 2.500z" fill={SKY} />
          </svg>
          <Spacer $w={6} />
          <Fit w={16} size={10}>0.0s</Fit>
          <Spacer $w={18} />
          <svg width="10" height="10" viewBox="0 0 10 10">
            <path d="M1 0v10M1 5.500h5" stroke="#55565a" strokeWidth="1.600" /><path d="M5 2.500l5 3-5 3z" fill="#55565a" />
          </svg>
          <Spacer $w={5} />
          <Fit w={7} size={10}>--</Fit>
          <Spacer $w={25} />
          <svg width="16" height="10" viewBox="0 0 16 10">
            <path d="M1 0v10M15 0v10M1 5.500h10" stroke="#45464a" strokeWidth="1.800" /><path d="M9 2.500l5 3-5 3z" fill="#45464a" />
          </svg>
          <Spacer $w={1} />
          <Fit w={6} size={10}>--</Fit>
          <Spacer $w={28} />
          <svg width="13" height="13" viewBox="0 0 13 13">
            <circle cx="6.500" cy="7.500" r="4.700" fill="none" stroke="#55565a" strokeWidth="1.300" />
            <path d="M6.500 7.500V3.500a4 4 0 014 4zM5 .5h3v1.800H5z" fill="#55565a" />
            <path d="M1 3.500l2-2M12 3.500l-2-2" stroke="#55565a" strokeWidth="1.300" />
          </svg>
          <Spacer $w={2} />
          <Fit w={16} size={10}>3.0s</Fit>
          <Spacer $w={28} />
          <SliderLine />
          <Knob />
          <FootThumb />
        </TimelineFoot>
      </Tracks>
    </Timeline>
  );
}

/* ---------- quiz panel ---------- */

function CheckRow({ mt, label, w, on, disabled, pad }) {
  return (
    <Row $mt={mt} $dark $disabled={disabled} $pad={pad}>
      <Box $on={on} $disabled={disabled}>{on && <Check />}</Box>
      <Fit w={w} size={12}>{label}</Fit>
    </Row>
  );
}

function DropDown({ value, vw, w, ml }) {
  return (
    <Select $w={w} $ml={ml}>
      <Fit w={vw} size={12}>{value}</Fit>
      <Chevron w={8} h={5} color="#66676c" sw={1.300} />
    </Select>
  );
}

function QuizPanel() {
  return (
    <QuizColumn>
      <PanelTabs>
        <PanelTab $pad={37}><Fit w={39} size={12} weight={700}>プロパティ</Fit></PanelTab>
        <PanelTab $pad={37}><Fit w={39} size={12} weight={700}>タイミング</Fit></PanelTab>
        <PanelTab $pad={44} $active><Fit w={24} size={12} weight={700}>クイズ</Fit></PanelTab>
      </PanelTabs>
      <QuizBody>
        <Form>
          <Row $mt={0} $pad={4}>
            <svg width="22" height="19" viewBox="0 0 22 19">
              <rect x=".75" y=".75" width="20.500" height="17.500" fill="#fff" stroke="#2d7cad" strokeWidth="1.500" />
              <path d="M4.500 3h3v3h-3zM4.500 8h3v3h-3zM4.500 13h3v3h-3z" fill="none" stroke="#2d6f9e" />
              <path d="M4 2.500h4v3.500H4z" fill="#1c4f78" />
              <path d="M10 4.500h8M10 9.500h8M10 14.500h8" stroke="#dcae3c" strokeWidth="1.300" />
            </svg>
            <Spacer $w={14} />
            <Fit w={74} size={13}>多肢選択問題</Fit>
          </Row>
          <Row $mt={10}><Fit w={31} size={12}>解答 :</Fit><Value $ml={10}><Fit w={6} size={12}>2</Fit></Value></Row>
          <CheckRow mt={7} label="解答 をシャッフル" w={76} />
          <CheckRow mt={3} label="複数解答" w={48} on />
          <CheckRow mt={3} label="部分 スコア" w={51} />
          <Row $mt={11} $pad={9}><Fit w={18} size={12}>点 :</Fit><Value $ml={10}><Fit w={12} size={12}>10</Fit></Value></Row>
          <Row $mt={11} $pad={9}><Fit w={52} size={12}>ペナルティ :</Fit><Value $ml={10}><Fit w={6} size={12}>0</Fit></Value></Row>
          <Row $mt={24} $h={25}><Fit w={54} size={12}>番号付け :</Fit><DropDown value="なし" vw={20} w={202} ml={11} /></Row>
          <Rule $mt={11} />
          <Row $mt={9}><Fit w={60} size={12} weight={700}>キャプション :</Fit></Row>
          <CheckRow mt={2} label="正解" w={23} />
          <CheckRow mt={3} label="不完全" w={35} on />
          <CheckRow mt={7} label="制限時間" w={48} />
          <Row $mt={9}>
            <Fit w={55} size={12}>制限時間 :</Fit>
            <Row as="span" $disabled $pad={0}>
              <Value $ml={10}><Fit w={6} size={12}>0</Fit></Value>
              <Spacer $w={2} />
              <Fit w={22} size={12}>(秒)</Fit>
            </Row>
          </Row>
          <CheckRow mt={7} label="タイムアウトキャプション" w={108} disabled />
          <Row $mt={8}><Fit w={34} size={12} weight={700}>ボタン :</Fit></Row>
          <CheckRow mt={2} label="クリア" w={23} />
          <CheckRow mt={3} label="戻る" w={21} />
          <CheckRow mt={3} label="スキップ" w={35} />
          <Rule $mt={9} />
          <Row $mt={6}><Fit w={45} size={12} weight={700}>アクション</Fit></Row>
          <Row $mt={2} $h={19}><Fit w={66} size={12}>成功の場合 :</Fit></Row>
          <Row $mt={0} $h={25}><DropDown value="続行" vw={23} /></Row>
          <Row $mt={10}><Fit w={55} size={12}>試行回数 :</Fit><Value $ml={10}><Fit w={6} size={12}>1</Fit></Value></Row>
          <CheckRow mt={7} label="試行回数制限 なし" w={94} />
          <CheckRow mt={3} label="再試行 メッセージ" w={81} on disabled />
          <Row $mt={4}><Fit w={77} size={12}>失敗 メッセージ :</Fit></Row>
          <Row $mt={1} $h={25}><DropDown value="なし" vw={20} /></Row>
          <Row $mt={7} $h={18}><Fit w={56} size={12}>最終試行 :</Fit></Row>
          <Row $mt={0} $h={25}><DropDown value="続行" vw={23} /></Row>
          <Rule $mt={17} />
          <Row $mt={8} $pad={8}><Fit w={24} size={12} weight={900} color="#000">報告</Fit></Row>
          <CheckRow mt={4} label="解答 を報告" w={57} on pad={4} />
          <Row $mt={4} $h={21} $pad={4}>
            <Fit w={83} size={12}>インタラクション ID</Fit>
            <IdInput><Fit w={31} size={12}>10561</Fit></IdInput>
          </Row>
        </Form>
        <QuizScroll><QuizThumb /></QuizScroll>
      </QuizBody>
    </QuizColumn>
  );
}

/* ---------- taskbar ---------- */

const EdgeIcon = ({ id, user }) => (
  <svg width="30" height="30" viewBox="0 0 30 30">
    <defs>
      <linearGradient id={id} x1="0" y1="0" x2="1" y2=".5">
        <stop offset="0" stopColor="#1b93d8" />
        <stop offset=".5" stopColor="#2fc0dc" />
        <stop offset="1" stopColor="#5fdc4e" />
      </linearGradient>
    </defs>
    <path d="M0 15C0 6 7 0 15.500 0 24 0 30 6 30 12.500c0 5-3.500 7.500-7.500 7.500-3 0-5-1-4-3 1.500-3 0-6.500-5-7C8 9.500 2 11 0 15z" fill={`url(#${id})`} />
    <path d="M0 15c2-4.500 8-6.500 13-5-4 1.500-6 5-5 9.500 1 5 5 8.500 9 9.500C8 31.500 0 25 0 15z" fill="#1676c8" />
    <path d="M11 18c0 6 6 9.500 12 8 2-.5 4-1.500 5.500-3C26 28 21 30 16.500 30 11 29.500 7 24 8.500 18z" fill="#134a8c" />
    {user && (
      <g>
        <circle cx="7.500" cy="22" r="7.300" fill="#b9babb" />
        <circle cx="7.500" cy="20" r="2.700" fill="#77797b" />
        <path d="M2.500 27c0-5 10-5 10 0-2.500 3-7.500 3-10 0z" fill="#77797b" />
      </g>
    )}
  </svg>
);

const AppTile = ({ bg, border, color, children }) => (
  <svg width="28" height="28" viewBox="0 0 28 28">
    <rect x="1" y="1" width="26" height="26" rx="2" fill={bg} stroke={border} strokeWidth="2" />
    <text x="14" y="20" textAnchor="middle" fontSize="17" fontWeight="700" fill={color} fontFamily="Noto Sans CJK JP, sans-serif" textLength="17" lengthAdjust="spacingAndGlyphs">{children}</text>
  </svg>
);

const taskItems = [
  {
    name: 'explorer',
    open: true,
    icon: (
      <svg width="28" height="25" viewBox="0 0 28 25">
        <path d="M0 1.500C0 .5.500 0 1.500 0H12l2 3.500H0z" fill="#d89a14" />
        <path d="M0 3h28v19c0 .6-.4 1-1 1H1c-.6 0-1-.4-1-1z" fill="#fbd463" />
        <path d="M5 25v-9c0-1.500 1-2.500 2.500-2.500h13c1.500 0 2.500 1 2.500 2.500v9h-4.500v-6.500h-9V25z" fill="#3f95cf" />
      </svg>
    ),
  },
  {
    name: 'zoom',
    icon: (
      <svg width="30" height="30" viewBox="0 0 30 30">
        <rect width="30" height="30" rx="12" fill="#0b5cff" />
        <text x="15" y="17.500" textAnchor="middle" fontSize="9" fontWeight="600" fill="#fff" fontFamily="Open Sans, sans-serif" textLength="21" lengthAdjust="spacingAndGlyphs">zoom</text>
      </svg>
    ),
  },
  { name: 'edge', icon: <EdgeIcon id="edgeA" user /> },
  {
    name: 'chrome',
    open: true,
    icon: (
      <svg width="30" height="30" viewBox="0 0 30 30">
        <path d="M28 7.500A15 15 0 0115 30l6.500-11.500L15 7.500z" fill="#ffcd40" />
        <path d="M2 7.500A15 15 0 0015 30l6.500-11.300L15 15z" fill="#0f9d58" />
        <path d="M15 7.500h13A15 15 0 002 7.500l6.500 11z" fill="#db4437" />
        <circle cx="15" cy="15" r="7.300" fill="#f1f1f1" />
        <circle cx="15" cy="15" r="6" fill="#4285f4" />
      </svg>
    ),
  },
  { name: 'edge-user', open: true, icon: <EdgeIcon id="edgeB" user /> },
  {
    name: 'notepad',
    icon: (
      <svg width="29" height="28" viewBox="0 0 29 28">
        <path d="M24 4l4 21-6 2z" fill="#8b6b4d" />
        <path d="M9 3l16 1-3 23-21-5z" fill="#8fc7d0" />
        <path d="M9 3l16 1-1 7-17-2z" fill="#c9e6ea" />
        <path d="M9 2.500l16 1.200" stroke="#666" strokeWidth="2.500" strokeDasharray="1.200 1" />
        <path d="M1 22l21 5" stroke="#d9eef2" strokeWidth="1.500" />
      </svg>
    ),
  },
  { name: 'captivate', open: true, active: true, icon: <AppTile bg="#06291c" border="#27c777" color="#37d883">Cp</AppTile> },
  {
    name: 'torch',
    icon: (
      <svg width="30" height="30" viewBox="0 0 30 30">
        <ellipse cx="16" cy="16.500" rx="12" ry="12.500" fill="#0a0aa8" />
        <path d="M15 13l4 4L4 30l-3-1v-3z" fill="#b9b9b9" stroke="#222" />
        <path d="M12 11l8 8 2-4-5-6z" fill="#d8d8d8" stroke="#222" />
        <path d="M16 13c-1-5 3-5 3-9 2 1 1 3 2 3 2-1 1-4 2-6 4 3 5 8 3 12-1 3-5 4-7 3z" fill="#f02317" />
        <path d="M17 13c0-3 3-3 3-5 2 1 2 2 3 1 1 3 0 6-3 7z" fill="#ffe04a" />
      </svg>
    ),
  },
  {
    name: 'paint',
    open: true,
    icon: (
      <svg width="30" height="30" viewBox="0 0 30 30">
        <path d="M1 20C0 12 8 5 17 5c7 0 12 4 11.500 11C28 24 20 28 14 28c-4 0-2-4-5-4.500C6 23 2 24 1 20z" fill="#bcdcee" stroke="#7fa9c4" />
        <circle cx="6" cy="17" r="2.500" fill="#e04c3c" />
        <circle cx="10" cy="11.500" r="2.500" fill="#58b848" />
        <circle cx="16" cy="9" r="2.300" fill="#f0b429" />
        <circle cx="13" cy="19" r="2" fill="#fff" />
        <path d="M25 5l2 1-9 23-2-.5z" fill="#c4783a" />
        <path d="M23 6c-1-3 1-5 2-6 3 0 5 3 4 5l-3 2z" fill="#d3a06a" />
      </svg>
    ),
  },
  {
    name: 'photos',
    open: true,
    icon: (
      <svg width="28" height="28" viewBox="0 0 28 28">
        <rect width="28" height="28" rx="1" fill="#27a8ea" />
        <path d="M14 20l6-7 8 9v6H14z" fill="#5d84d8" />
        <path d="M0 21L9.500 10 26 28H0z" fill="#173f7c" />
        <circle cx="18.500" cy="6.500" r="2.800" fill="#fff" />
      </svg>
    ),
  },
  { name: 'illustrator', open: true, icon: <AppTile bg="#300" border="#2c0002" color="#ff9a00">Ai</AppTile> },
];

function TaskbarPanel() {
  return (
    <Taskbar>
      <Start>
        <svg width="20" height="20" viewBox="0 0 20 20">
          <path d="M0 2.800l8.300-1.200v7.900H0zM9.300 1.400L20 0v9.500H9.300zM0 10.500h8.300v7.900L0 17.200zM9.300 10.500H20V20L9.300 18.600z" fill="#000" />
        </svg>
      </Start>
      <Search>
        <svg width="20" height="20" viewBox="0 0 20 20">
          <circle cx="12.500" cy="7.300" r="6.400" fill="none" stroke="#222" strokeWidth="1.400" />
          <path d="M8 12L.7 19.300" stroke="#222" strokeWidth="1.400" />
        </svg>
        <Spacer $w={14} />
        <Fit w={143} size={17.500} weight={300}>ここに入力して検索</Fit>
        <SearchPill>
          <svg width="38" height="32" viewBox="0 0 38 32">
            <path d="M13.500 6V3.500c0-1 .8-2 2-2h7c1.200 0 2 1 2 2V6" fill="none" stroke="#3b3b3b" strokeWidth="3" />
            <rect y="5" width="38" height="26.500" rx="2" fill="#a85c09" />
            <path d="M0 7c0-1 1-2 2-2h34c1 0 2 1 2 2v12H0z" fill="#d9830f" />
            <rect x="15.500" y="16" width="7" height="7.500" rx="1" fill="#f9d423" />
          </svg>
        </SearchPill>
      </Search>
      <TaskSlot>
        <TaskIcon>
          <svg width="21" height="20" viewBox="0 0 21 20" transform="translate(-1 -1)">
            <path d="M.7 0v3.500h12V0M.7 20v-3.500h12V20M.7 6h12v8H.7z" fill="none" stroke="#111" strokeWidth="1.400" />
            <path d="M18.500 0v4M18.500 11v9" stroke="#111" strokeWidth="1.400" />
            <path d="M17 6h3v3.500h-3z" fill="#111" />
          </svg>
        </TaskIcon>
      </TaskSlot>
      {taskItems.map(item => (
        <TaskSlot key={item.name} $active={item.active}>
          <TaskIcon>{item.icon}</TaskIcon>
          {item.open && <TaskLine $active={item.active} />}
        </TaskSlot>
      ))}
      <Tray>
        <svg width="17" height="10" viewBox="0 0 17 10"><path d="M1 9l7.500-7.500L16 9" fill="none" stroke="#111" strokeWidth="1.400" /></svg>
        <Spacer $w={14} />
        <svg width="16" height="18" viewBox="0 0 16 18">
          <rect x="1" y="4" width="9.500" height="10" rx="2" fill="none" stroke="#111" strokeWidth="1.300" />
          <path d="M10.500 7.500L14.500 5v8l-4-2.500M2.500 1.500c2-1 5-1 7 0M2.500 16.500c2 1 5 1 7 0" fill="none" stroke="#111" strokeWidth="1.300" />
        </svg>
        <Spacer $w={11} />
        <svg width="20" height="14" viewBox="0 0 20 14">
          <path d="M1 0v3M4 0v3M0 3h5v3H0zM2.500 6v6H5" fill="none" stroke="#111" strokeWidth="1.200" />
          <rect x="7.500" y="4.500" width="9" height="6" fill="#111" stroke="#111" />
          <path d="M6 2.500h12v10H5M19.300 5.500v4" fill="none" stroke="#111" strokeWidth="1.300" />
        </svg>
        <Spacer $w={10} />
        <svg width="20" height="16" viewBox="0 0 20 16">
          <path d="M5.500.7h13.800v10.600H3M9 15.300h7M12.500 11.500v4M.7.700h4v4h-4zM2.700 5v10" fill="none" stroke="#111" strokeWidth="1.300" />
        </svg>
        <Spacer $w={10} />
        <svg width="19" height="14" viewBox="0 0 19 14">
          <path d="M.7 4.500h2.600L6.700 1v12L3.300 9.500H.7zM11 3.500l7 7M18 3.500l-7 7" fill="none" stroke="#111" strokeWidth="1.300" />
        </svg>
        <Spacer $w={12} />
        <Fit w={15} size={24} weight={400}>A</Fit>
        <Clock>
          <Fit w={35} size={15.500}>19:14</Fit>
          <Fit w={76} size={15.500}>2023/07/27</Fit>
        </Clock>
        <svg width="20" height="20" viewBox="0 0 20 20">
          <path d="M0 0h20v16h-7.500L10 19.500 7.500 16H0z" fill="#000" />
          <path d="M3.500 4.500h13M3.500 8h13M3.500 11.500h9" stroke="#dfe5e0" strokeWidth="1.300" />
        </svg>
        <DesktopEdge />
      </Tray>
    </Taskbar>
  );
}

function App() {
  return (
    <>
      <GlobalStyle />
      <Screen>
        <AppWindow>
          <Header />
          <Frame>
            <Toolbar>
              {tools.map((tool, i) => <ToolItem key={i} tool={tool} />)}
              <Push />
              {rightTools.map(tool => <ToolItem key={tool.label} tool={tool} />)}
              <Spacer $w={11} />
            </Toolbar>
            <Columns>
              <Filmstrip />
              <CenterColumn>
                <DocTabs>
                  <DocTab>
                    <Fit w={147} size={14}>サンプル利用規約2.cptx*</Fit>
                    <Fit w={7} size={14}>×</Fit>
                  </DocTab>
                </DocTabs>
                <Stage />
                <HScroll>
                  <Angle turn={-90} />
                  <HThumb />
                  <Angle turn={90} />
                </HScroll>
                <TimelineTitle><Fit w={50} size={12} weight={700}>タイムライン</Fit></TimelineTitle>
                <TimelinePanel />
              </CenterColumn>
              <QuizPanel />
            </Columns>
          </Frame>
          <StatusBar>
            <StatusText $mr={1}><Fit w={269} size={12}>{'C:\\Users\\mplus\\Documents\\My  Adobe  Captivate  Projects\\'}</Fit></StatusText>
            <StatusText><Fit w={115} size={12}>サンプル利用規約2.cptx</Fit></StatusText>
            <Push />
            <BarLine $w={2} $h={19} $color="#e4e4e6" />
            <Spacer $w={11} />
            <StatusText><Fit w={103} size={12}>フィルムストリップビュー</Fit></StatusText>
            <Spacer $w={17} />
            <BarLine $w={2} $h={19} $color="#e4e4e6" />
            <Spacer $w={5} />
            <StatusText><Fit w={53} size={12}>1280 x 720</Fit></StatusText>
          </StatusBar>
        </AppWindow>
        <TaskbarPanel />
      </Screen>
    </>
  );
}

export default App;
